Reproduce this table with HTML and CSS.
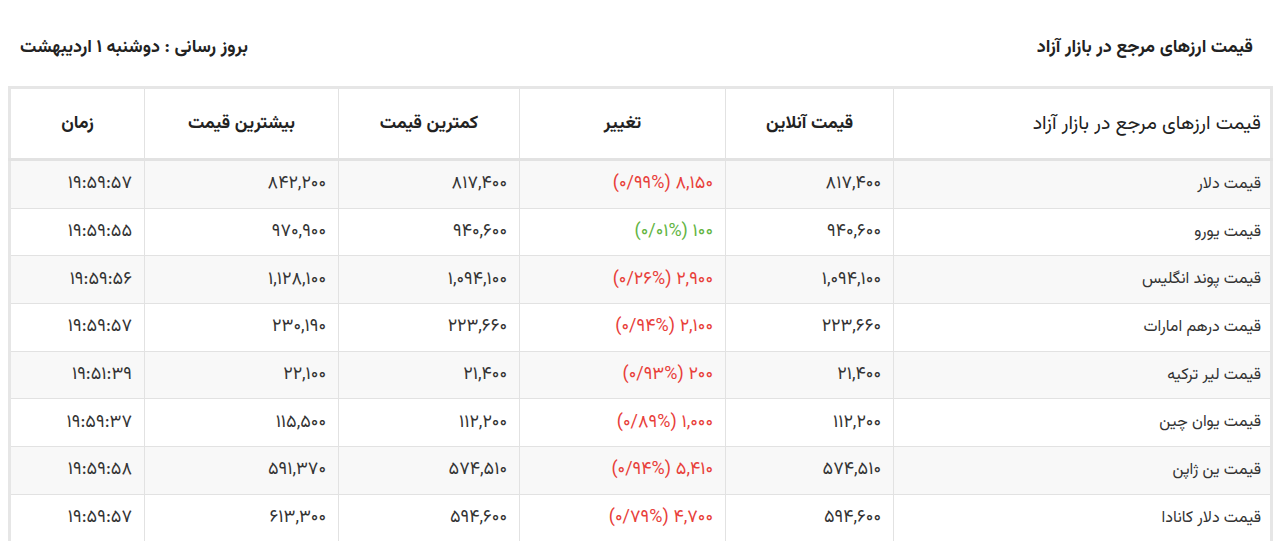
FILE: index.html
```html
<!DOCTYPE html>
<html lang="fa" dir="rtl">
<head>
<meta charset="utf-8">
<title>قیمت ارزهای مرجع</title>
<link rel="stylesheet" href="styles.css">
</head>
<body>
<div class="page">
  <div class="topbar">
    <h2 class="title">قیمت ارزهای مرجع در بازار آزاد</h2>
    <div class="updated">بروز رسانی : دوشنبه ۱ اردیبهشت</div>
  </div>
  <table class="rates">
    <colgroup>
      <col class="c-name"><col class="c-online"><col class="c-change"><col class="c-min"><col class="c-max"><col class="c-time">
    </colgroup>
    <thead>
      <tr>
        <th class="h-name">قیمت ارزهای مرجع در بازار آزاد</th>
        <th>قیمت آنلاین</th>
        <th>تغییر</th>
        <th>کمترین قیمت</th>
        <th>بیشترین قیمت</th>
        <th>زمان</th>
      </tr>
    </thead>
    <tbody>
      <tr><td class="name">قیمت دلار</td><td class="num">۸۱۷,۴۰۰</td><td class="num down">۸,۱۵۰ (۰/۹۹%)</td><td class="num">۸۱۷,۴۰۰</td><td class="num">۸۴۲,۲۰۰</td><td class="num">۱۹:۵۹:۵۷</td></tr>
      <tr><td class="name">قیمت یورو</td><td class="num">۹۴۰,۶۰۰</td><td class="num up">۱۰۰ (۰/۰۱%)</td><td class="num">۹۴۰,۶۰۰</td><td class="num">۹۷۰,۹۰۰</td><td class="num">۱۹:۵۹:۵۵</td></tr>
      <tr><td class="name">قیمت پوند انگلیس</td><td class="num">۱,۰۹۴,۱۰۰</td><td class="num down">۲,۹۰۰ (۰/۲۶%)</td><td class="num">۱,۰۹۴,۱۰۰</td><td class="num">۱,۱۲۸,۱۰۰</td><td class="num">۱۹:۵۹:۵۶</td></tr>
      <tr><td class="name">قیمت درهم امارات</td><td class="num">۲۲۳,۶۶۰</td><td class="num down">۲,۱۰۰ (۰/۹۴%)</td><td class="num">۲۲۳,۶۶۰</td><td class="num">۲۳۰,۱۹۰</td><td class="num">۱۹:۵۹:۵۷</td></tr>
      <tr><td class="name">قیمت لیر ترکیه</td><td class="num">۲۱,۴۰۰</td><td class="num down">۲۰۰ (۰/۹۳%)</td><td class="num">۲۱,۴۰۰</td><td class="num">۲۲,۱۰۰</td><td class="num">۱۹:۵۱:۳۹</td></tr>
      <tr><td class="name">قیمت یوان چین</td><td class="num">۱۱۲,۲۰۰</td><td class="num down">۱,۰۰۰ (۰/۸۹%)</td><td class="num">۱۱۲,۲۰۰</td><td class="num">۱۱۵,۵۰۰</td><td class="num">۱۹:۵۹:۳۷</td></tr>
      <tr><td class="name">قیمت ین ژاپن</td><td class="num">۵۷۴,۵۱۰</td><td class="num down">۵,۴۱۰ (۰/۹۴%)</td><td class="num">۵۷۴,۵۱۰</td><td class="num">۵۹۱,۳۷۰</td><td class="num">۱۹:۵۹:۵۸</td></tr>
      <tr><td class="name">قیمت دلار کانادا</td><td class="num">۵۹۴,۶۰۰</td><td class="num down">۴,۷۰۰ (۰/۷۹%)</td><td class="num">۵۹۴,۶۰۰</td><td class="num">۶۱۳,۳۰۰</td><td class="num">۱۹:۵۹:۵۷</td></tr>
    </tbody>
  </table>
</div>
</body>
</html>
```

FILE: styles.css
```css
html, body {
  margin: 0;
  padding: 0;
  background: #ffffff;
}
body {
  font-family: "Vazirmatn", "Noto Sans Arabic", "DejaVu Sans", sans-serif;
  color: #333333;
}
.page {
  padding: 0 7px 0 8px;
}
.topbar {
  display: flex;
  justify-content: space-between;
  align-items: center;
  height: 76px;
  padding: 10px 20px 0 12px;
}
.title {
  margin: 0;
  font-size: 18px;
  font-weight: bold;
  color: #222222;
}
.updated {
  font-size: 18px;
  font-weight: bold;
  color: #222222;
}
.rates {
  width: 100%;
  border-collapse: collapse;
  border: 3px solid #e6e6e6;
  table-layout: fixed;
  font-size: 16px;
}
.c-name { width: 378px; }
.c-online { width: 168px; }
.c-change { width: 206px; }
.c-min { width: 181px; }
.c-max { width: 194px; }
.c-time { width: auto; }
.rates th {
  height: 67px;
  border: 1px solid #e2e2e2;
  border-bottom: 3px solid #e2e2e2;
  font-weight: bold;
  font-size: 18px;
  text-align: center;
  color: #222222;
  background: #ffffff;
}
.rates th.h-name {
  font-weight: normal;
  font-size: 19.5px;
  text-align: right;
  padding-right: 9px;
}
.rates td {
  height: 46.7px;
  border: 1px solid #e2e2e2;
  text-align: right;
  padding: 0 12px;
  color: #333333;
}
.rates td.name {
  padding-right: 9px;
}
.rates td.num {
  font-size: 18px;
}
.rates tbody tr:nth-child(odd) td {
  background: #f8f8f8;
}
.rates td.down { color: #e8403a; }
.rates td.up { color: #63b544; }
```
